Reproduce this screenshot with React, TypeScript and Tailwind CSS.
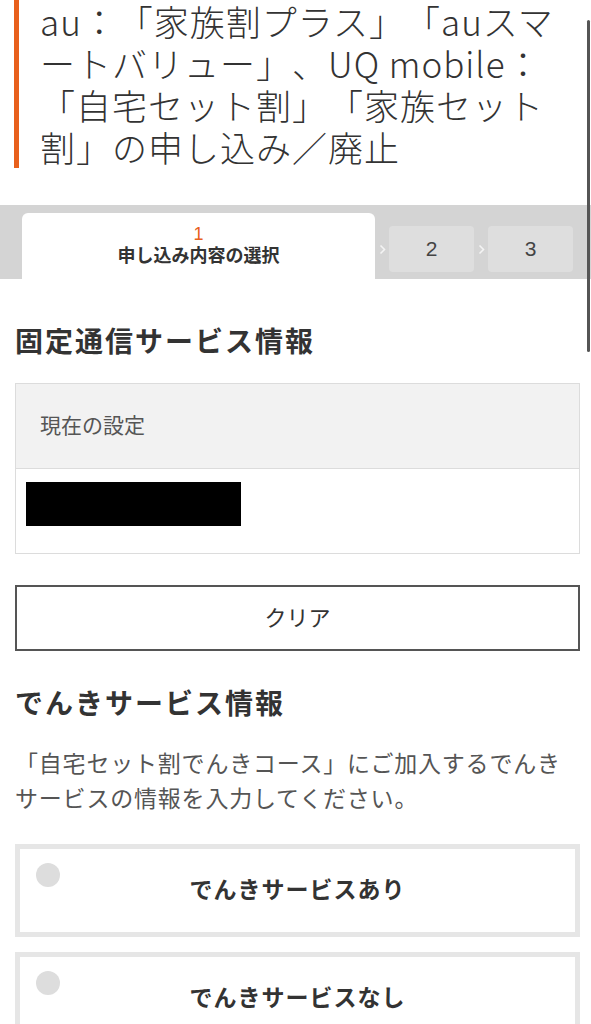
const font = { fontFamily: '"Liberation Sans", "Noto Sans CJK JP", sans-serif' }
const titleFont = { fontFamily: '"Noto Sans CJK JP", "Liberation Sans", sans-serif' }

const Chevron = () => (
  <div className="flex w-[14px] items-center justify-center">
    <svg width="7" height="11" viewBox="0 0 7 11" fill="none">
      <path d="M1.5 1.5L5.5 5.5L1.5 9.5" stroke="#f4f4f4" strokeWidth="1.6" />
    </svg>
  </div>
)

const StepBox = ({ n }: { n: number }) => (
  <div className="flex w-[85px] items-center justify-center rounded-[4px] bg-[#dedede] text-[21px] text-[#444]">
    {n}
  </div>
)

const RadioCard = ({ label }: { label: string }) => (
  <div className="grid h-[93px] grid-cols-[1fr_auto_1fr] items-center border-[5px] border-[#e6e6e6] bg-white">
    <div className="self-start pl-[16px] pt-[14px]">
      <div className="h-[24px] w-[24px] rounded-full bg-[#dddddd]" />
    </div>
    <span className="text-[23px] font-bold tracking-[1px] text-[#333]">{label}</span>
    <div />
  </div>
)

export default function App() {
  return (
    <div
      className="relative min-h-screen w-full overflow-hidden bg-white text-[#333] [text-spacing-trim:space-all]"
      style={font}
    >
      {/* page title */}
      <h1
        className="ml-[14px] border-l-[5px] border-[#e8601c] pl-[21px] pr-[21px] text-[35px] font-light leading-[42px] tracking-[1px] text-[#333]"
        style={titleFont}
      >
        au：「家族割プラス」「auスマートバリュー」、UQ mobile：「自宅セット割」「家族セット割」の申し込み／廃止
      </h1>

      {/* steps */}
      <div className="mt-[37px] flex h-[74px] bg-[#d4d4d4] pl-[22px]">
        <div className="flex h-[66px] w-[353px] flex-col items-center self-end rounded-t-[6px] bg-white pt-[10px]">
          <span className="text-[18px] leading-[22px] text-[#e8601c]">1</span>
          <span className="text-[18px] font-bold leading-[22px] text-[#333]">申し込み内容の選択</span>
        </div>
        <div className="mt-[21px] flex h-[46px]">
          <Chevron />
          <StepBox n={2} />
          <Chevron />
          <StepBox n={3} />
        </div>
      </div>

      <div className="pb-10 pl-[15px] pr-[11px]">
        <h2 className="mt-[46px] text-[28px] font-bold leading-[36px] tracking-[2px] text-[#333]">固定通信サービス情報</h2>

        <div className="mt-[22px] border-[1.5px] border-[#dcdcdc]">
          <div className="flex h-[85px] items-center border-b-[1.5px] border-[#dcdcdc] bg-[#f2f2f2] pl-[24px] text-[21px] text-[#555]">
            現在の設定
          </div>
          <div className="pb-[27px] pl-[10px] pt-[13px]">
            <div className="h-[44px] w-[215px] bg-black" />
          </div>
        </div>

        <button className="mt-[31px] flex h-[66px] w-full items-center justify-center border-2 border-[#555] bg-white text-[22px] text-[#333]">
          クリア
        </button>

        <h2 className="mt-[36px] text-[28px] font-bold leading-[36px] tracking-[2px] text-[#333]">でんきサービス情報</h2>

        <p className="mt-[24px] text-[23px] leading-[35px] tracking-[0.8px] text-[#555]">
          「自宅セット割でんきコース」にご加入するでんきサービスの情報を入力してください。
        </p>

        <div className="mt-[27px] flex flex-col gap-[15px]">
          <RadioCard label="でんきサービスあり" />
          <RadioCard label="でんきサービスなし" />
        </div>
      </div>

      {/* overlay scrollbar */}
      <div className="absolute right-[1px] top-[20px] h-[332px] w-[3px] rounded-full bg-[#555]" />
    </div>
  )
}
